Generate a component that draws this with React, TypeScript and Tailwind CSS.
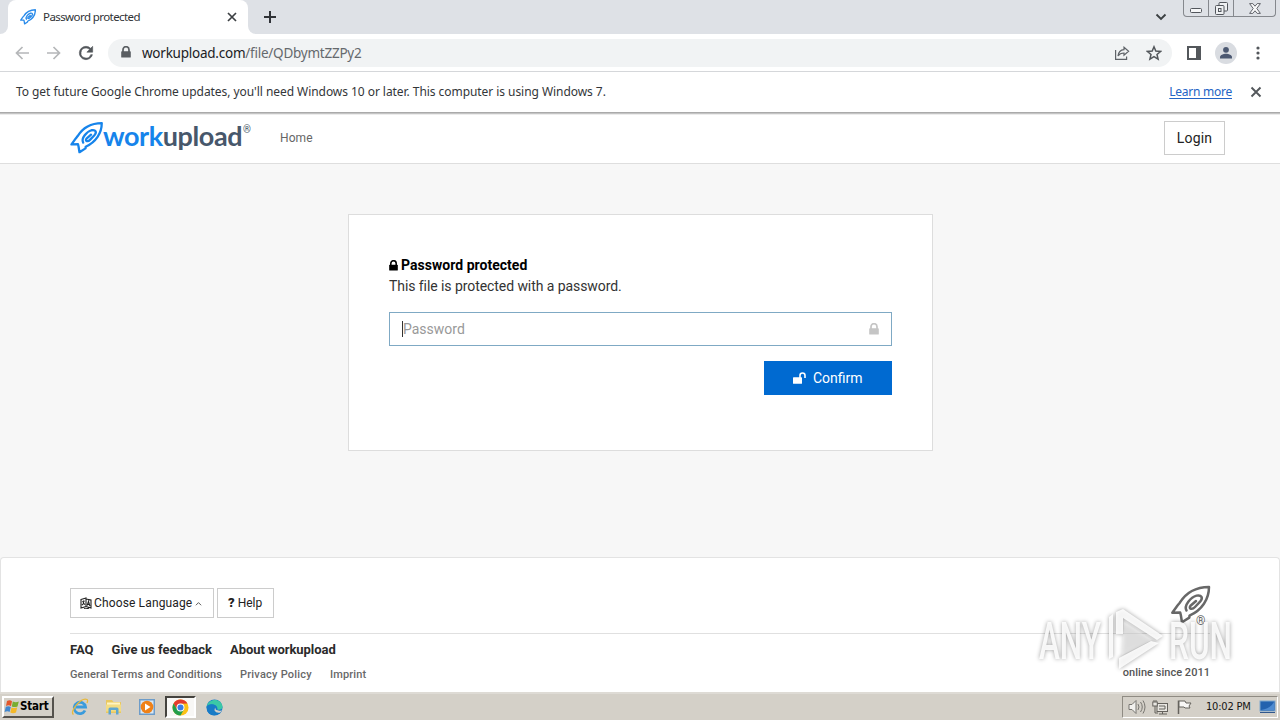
import type { ReactNode } from "react";

function Rocket({ className, sw = 2.6 }: { className: string; sw?: number }) {
  return (
    <svg viewBox="0 0 40 40" className={className} fill="none" stroke="currentColor" strokeWidth={sw} strokeLinejoin="round" strokeLinecap="round">
      <path d="M38.500 1.900C25.500 2 15.500 7.500 9.300 17.700L7 20.500 1.800 27.800 9.700 27.600 10.300 30 11.500 37.200 18.800 32.600 19 30.600C31.500 25 38.500 14 38.500 1.900Z" />
      <path d="M16 25.500C13 20.500 20.500 12 26 10.600C31.300 9.500 32.800 13.200 29.600 16.700L24.500 22C21.500 25.200 17.800 23.800 20 20.800L25.500 16" />
    </svg>
  );
}

function Lock({ className }: { className: string }) {
  return (
    <svg viewBox="0 0 10 12" className={className}>
      <path d="M2 6V3.700a3 3 0 0 1 6 0V6" fill="none" stroke="currentColor" strokeWidth="1.700" />
      <rect x="0.200" y="5.200" width="9.600" height="6.400" rx="0.700" fill="currentColor" />
    </svg>
  );
}

function BrowserTabs() {
  return (
    <div className="flex h-[34px] shrink-0 items-start bg-[#dee1e6]">
      <div className="h-[34px] w-2 bg-white">
        <div className="h-full w-full rounded-br-lg bg-[#dee1e6]" />
      </div>
      <div className="flex h-[34px] w-[240px] items-center rounded-t-lg bg-white pl-3 pr-2.5">
        <Rocket className="h-4 w-4 shrink-0 text-[#2a8bea]" sw={3.3} />
        <span className="ml-[7px] flex-1 whitespace-nowrap text-[11.500px] tracking-[-0.58px] text-[#303336]">Password protected</span>
        <svg viewBox="0 0 12 12" className="h-3 w-3 text-[#3c4043]" stroke="currentColor" strokeWidth="1.700"><path d="M2 2l8 8M10 2l-8 8" /></svg>
      </div>
      <div className="h-[34px] w-2 bg-white">
        <div className="h-full w-full rounded-bl-lg bg-[#dee1e6]" />
      </div>
      <svg viewBox="0 0 14 14" className="ml-[7px] mt-[10px] h-[14px] w-[14px]" stroke="#303338" strokeWidth="2"><path d="M7 1v12M1 7h12" /></svg>
      <div className="flex-1" />
      <svg viewBox="0 0 12 8" className="mr-4 mt-[13px] h-2 w-3" fill="none" stroke="#3c4043" strokeWidth="1.900"><path d="M1.500 1.500L6 6l4.500-4.500" /></svg>
      <div className="mr-[4px] flex h-[17px] w-[93px] rounded-b-[4px] border border-t-0 border-[#85888d] text-[#52565c]">
        <div className="flex w-[25px] justify-center border-r border-[#85888d]">
          <svg viewBox="0 0 12 5" className="mt-[8px] h-[5px] w-3"><rect x=".5" y=".5" width="11" height="4" rx="1" fill="#f5f6f7" stroke="currentColor" /></svg>
        </div>
        <div className="flex w-[25px] justify-center border-r border-[#85888d]">
          <svg viewBox="0 0 13 13" className="mt-[2px] h-[13px] w-[13px]" fill="#eef0f2" stroke="currentColor"><rect x="4" y=".5" width="8.500" height="8.500" rx="1" /><rect x=".5" y="3.500" width="8.500" height="9" rx="1" /><rect x="3.500" y="6.500" width="2.500" height="3" /></svg>
        </div>
        <div className="flex flex-1 justify-center">
          <svg viewBox="0 0 12 11" className="mt-[3px] h-[11px] w-3" fill="#f8f8f9" stroke="currentColor" strokeWidth=".9"><path d="M.6.6h3.200L6 3.200 8.200.6h3.200L7.800 5.500l3.600 4.900H8.200L6 7.800 3.800 10.400H.6l3.600-4.900z" /></svg>
        </div>
      </div>
    </div>
  );
}

function Toolbar() {
  return (
    <div className="flex h-[38px] shrink-0 items-center border-b border-[#d5d7da] bg-white pl-[15px] pr-[17px]">
      <svg viewBox="0 0 14 14" className="h-[14px] w-[14px]" fill="none" stroke="#b5b7b9" strokeWidth="1.700"><path d="M14 7H1.500M7.500 1L1.500 7l6 6" /></svg>
      <svg viewBox="0 0 14 14" className="ml-[18px] h-[14px] w-[14px]" fill="none" stroke="#b5b7b9" strokeWidth="1.700"><path d="M0 7h12.500M6.500 1l6 6-6 6" /></svg>
      <svg viewBox="0 0 24 24" className="ml-[15px] h-[20px] w-[20px]" fill="#53575b"><path d="M17.650 6.350A7.960 7.960 0 0 0 12 4a8 8 0 1 0 7.730 10h-2.080A6 6 0 1 1 12 6c1.660 0 3.140.690 4.220 1.780L13 11h7V4l-2.350 2.350z" stroke="#53575b" strokeWidth=".7" /></svg>
      <div className="ml-3 flex h-7 w-[1064px] items-center rounded-full bg-[#f1f3f4] pl-[13px] pr-[10px]">
        <Lock className="mb-px h-[12px] w-[10px] text-[#5a5e62]" />
        <span className="ml-[11px] flex-1 text-[13.500px] leading-7 tracking-[-0.24px] text-[#65696d]"><span className="text-[#202124]">workupload.com</span>/file/QDbymtZZPy2</span>
        <svg viewBox="0 0 16 16" className="h-4 w-4" fill="none" stroke="#5f6368" strokeWidth="1.200"><path d="M1.600 5v9.400h11v-2.800M10 2.200l4.600 4-4.600 4V8C7 8 5.300 9 4 11c.4-3.500 2.500-6 6-6.300z" /></svg>
        <svg viewBox="0 0 16 16" className="ml-4 h-4 w-4" fill="none" stroke="#53575b" strokeWidth="1.500"><path d="M8 1.800l1.800 4.300 4.700.4L11 9.500l1.100 4.600L8 11.700l-4.100 2.400L5 9.500 1.500 6.500l4.700-.4z" /></svg>
      </div>
      <svg viewBox="0 0 14 14" className="ml-[15px] h-[14px] w-[14px]"><rect x="1" y="1" width="12" height="12" fill="none" stroke="#53575b" strokeWidth="2" /><rect x="9" width="5" height="14" fill="#53575b" /></svg>
      <svg viewBox="0 0 22 22" className="ml-[14px] h-[22px] w-[22px]"><circle cx="11" cy="11" r="11" fill="#d9dce1" /><circle cx="11" cy="7.800" r="2.900" fill="#4b5871" /><path d="M5 16.500v-1.300c0-2.200 3.500-3.400 6-3.400s6 1.200 6 3.400v1.300z" fill="#4b5871" /></svg>
      <svg viewBox="0 0 4 14" className="ml-[19px] h-[14px] w-1" fill="#53575b"><circle cx="2" cy="2" r="1.600" /><circle cx="2" cy="7" r="1.600" /><circle cx="2" cy="12" r="1.600" /></svg>
    </div>
  );
}

function Watermark() {
  return (
    <svg viewBox="0 0 212 70" className="absolute left-[1034px] top-[604px] h-[70px] w-[212px]" style={{ filter: "drop-shadow(0 0 2px rgba(0,0,0,.42))" }}>
      <g fill="#fff" fillOpacity=".88" fontFamily="Roboto, sans-serif" fontWeight="500" fontSize="51">
        <text x="5" y="55" textLength="62" lengthAdjust="spacingAndGlyphs">ANY</text>
        <text x="135" y="55" textLength="63" lengthAdjust="spacingAndGlyphs">RUN</text>
      </g>
      <path d="M75 55V13l4-3v43zM82 30V8l7-3 40 27-6 4-34-22v16zM85 54l32-17 8 2-40 26z" fill="#fff" fillOpacity=".88" />
      <path d="M90 18l28 18-30 15z" fill="#eee" fillOpacity=".45" />
    </svg>
  );
}

function OutlineButton({ children, className }: { children: ReactNode; className: string }) {
  return <button className={`flex items-center whitespace-nowrap border border-[#ccc] bg-white ${className}`}>{children}</button>;
}

function Footer() {
  return (
    <footer className="h-[135px] shrink-0 rounded-t border border-b-0 border-[#e3e3e3] bg-white px-[69px] pt-[30px]">
      <div className="flex h-[45px] justify-between">
        <div className="flex gap-[3px] text-[12px] text-[#222]">
          <OutlineButton className="h-[30px] w-[144px] pl-[9px]">
            <svg viewBox="0 0 12 12" className="mr-[2px] h-3 w-3" fill="none" stroke="#222" strokeWidth="1.100"><path d="M1 2.500l5-1.500v8.500l-5 1.500zM6 2l5 1v8l-5-1.500M2.300 4.700l2.400-.7M3.500 3.500v3L2 8.200M4.900 7.700L3.400 6M7.200 8.500L8.500 4.400l1.400 4.700M7.700 7.200l1.600.3M4 11.400c2 .8 3.500.4 5-.3" /></svg>
            <span className="tracking-[0.14px]">Choose Language</span>
            <svg viewBox="0 0 8 5" className="ml-[3px] mt-px h-[5px] w-[7px]" fill="none" stroke="#444"><path d="M1 4.500l3-3 3 3" /></svg>
          </OutlineButton>
          <OutlineButton className="h-[30px] w-[57px] pl-[10px]"><b className="mr-[3px] text-[13px] font-black">?</b>Help</OutlineButton>
        </div>
        <div className="relative h-10 w-10">
          <Rocket className="-mt-[3px] h-10 w-[41px] max-w-none text-[#686868]" sw={2.5} />
          <span className="absolute left-[26px] top-[25px] text-[12px] leading-4 text-[#686868]">®</span>
        </div>
      </div>
      <div className="flex justify-between border-t border-[#e0e0e0]">
        <div>
          <div className="mt-[7px] flex gap-[18px] text-[13px] font-bold leading-[18px] text-[#2b2b2b]">
            <span>FAQ</span><span className="tracking-[0.02px]">Give us feedback</span><span className="tracking-[-0.05px]">About workupload</span>
          </div>
          <div className="mt-[8px] flex gap-[18px] text-[11px] font-medium leading-4 text-[#686868]">
            <span className="tracking-[0.13px]">General Terms and Conditions</span><span className="tracking-[0.23px]">Privacy Policy</span><span className="tracking-[0.13px]">Imprint</span>
          </div>
        </div>
        <span className="mt-[31px] whitespace-nowrap text-[11px] font-medium leading-4 tracking-[0.03px] text-[#555]">online since 2011</span>
      </div>
    </footer>
  );
}

function Taskbar() {
  return (
    <div className="flex h-[28px] shrink-0 items-center border-t-2 border-[#dedbd5] bg-[#d4d0c8] pl-[2px] pr-[2px]">
      <button className="flex h-[22px] w-[52px] items-center border-2 border-b-[#55524d] border-l-[#fff] border-r-[#55524d] border-t-[#fff] bg-[#d4d0c8] font-[DejaVu_Sans_Condensed,sans-serif] text-[11.500px] font-bold tracking-[-0.2px] text-black">
        <svg viewBox="0 0 16 16" className="h-[16px] w-[16px] shrink-0"><path d="M3 2q3-1.500 5 .3L7 7.200Q5 5.500 2 6.900z" fill="#e3572b" /><path d="M8.800 2.600q3 1.300 6 0L13.500 7.500q-3 1.200-5.700 0z" fill="#79ad32" /><path d="M1.800 7.700q3-1.200 5 .4L5.600 13q-2-1.500-5 0z" fill="#4187cf" /><path d="M7.500 8.400q3 1.200 5.700.2L12 13.500q-3 1.300-5.700 0z" fill="#f4b829" /></svg>
        Start
      </button>
      <svg viewBox="0 0 18 18" className="ml-[17px] h-[18px] w-[18px]" fill="none"><path d="M14 12.500A5.700 5.700 0 1 1 14.500 9H5" stroke="#3a9bdc" strokeWidth="2.800" /><path d="M2.500 16.500C-2 14 10-1 16 1.500c1.200.7.500 2.300 0 3.500" stroke="#e8b93b" strokeWidth="1.300" /></svg>
      <svg viewBox="0 0 18 18" className="ml-4 h-[18px] w-[18px]"><path d="M1 2h6l1.500 2H16v11H1z" fill="#e9c860" /><path d="M2 4.500h13v3H2z" fill="#fff4c1" /><path d="M1 6.500h15v7H1z" fill="#f3dc83" /><path d="M3.500 16.500V11q0-1.500 1.500-1.500h7q1.500 0 1.500 1.500v5.500H11v-4.500H6v4.500z" fill="#5fa6d0" /></svg>
      <svg viewBox="0 0 18 18" className="ml-[15px] h-[18px] w-[18px]"><rect x="1" y="1" width="16" height="16" fill="#6d9cc9" /><rect x="2.500" y="2.500" width="13" height="13" fill="#d9e8f5" /><circle cx="9" cy="9" r="6.300" fill="#ef8118" /><path d="M7 5.500l5.500 3.500L7 12.500z" fill="#fff" /></svg>
      <div className="ml-[9px] flex h-[22px] w-[31px] items-center justify-center border-2 border-b-[#fff] border-l-[#44423e] border-r-[#fff] border-t-[#44423e] bg-[#f8f7f5]">
        <svg viewBox="0 0 18 18" className="h-[17px] w-[17px] shrink-0"><circle cx="9" cy="9" r="8.500" fill="#fbc116" /><path d="M1.640 4.750A8.500 8.500 0 0 1 16.360 4.750L9 5 5.500 11z" fill="#e33b2e" /><path d="M1.640 4.750A8.500 8.500 0 0 0 9 17.500l3.700-6.500L9 13 5.500 11z" fill="#229e4c" /><circle cx="9" cy="9" r="4.200" fill="#fff" /><circle cx="9" cy="9" r="3.200" fill="#397de5" /></svg>
      </div>
      <svg viewBox="0 0 18 18" className="ml-[10px] h-[17px] w-[17px]"><circle cx="9" cy="9" r="8.500" fill="#1577ca" /><path d="M.7 8C2-.5 16-2 17.500 8c0 3-3 4-5.500 3 1-5-7-7-11.300-3z" fill="#3bc8a6" /><path d="M.6 8C3 4 11 5 11 9c-3-1-2 5 4 4.500-3 5-11 5-13.500-.5z" fill="#187bc6" /><path d="M11 9q-2 1-.5 2.500 3 1.500 6.500.3-1 2-2.500 2.700-4 .5-5.500-2.300-.5-2.500 2-3.200z" fill="#d4d0c8" /></svg>
      <div className="flex-1" />
      <div className="flex h-[22px] w-[156px] items-center border border-b-white border-l-[#8f8b83] border-r-white border-t-[#8f8b83] pl-[5px]">
        <svg viewBox="0 0 18 16" className="h-4 w-[18px]" fill="#f2f1ee" stroke="#777570"><path d="M1 5.500h3l4-4v13l-4-4H1z" /><path d="M10 5q2 3 0 6M12.500 3q3.500 5 0 10M15 1.500q4 6.500 0 13" fill="none" /></svg>
        <svg viewBox="0 0 17 16" className="ml-[6px] h-4 w-[17px]" fill="#e8e6e1" stroke="#65625d"><rect x="5" y="4.500" width="10.500" height="8" /><path d="M7 15h8M10.500 13v2M7 7h6v3H7" /><rect x=".8" y="3" width="4.500" height="4" /><path d="M2 1v2M4 1v2M3 7v7h3" fill="none" /></svg>
        <svg viewBox="0 0 16 16" className="ml-[7px] h-4 w-4" fill="#f8f7f5" stroke="#65625d"><path d="M2.500 15V1.500" strokeWidth="1.500" /><path d="M3 2h6l1 2h5l-2 3 1 2H9L8 8H3z" /></svg>
        <span className="ml-[14px] w-[47px] whitespace-nowrap font-[DejaVu_Sans_Condensed,sans-serif] text-[11px] tracking-[-0.2px] text-[#151515]">10:02 PM</span>
        <svg viewBox="0 0 17 14" className="ml-[6px] h-[14px] w-[17px]"><rect x="1" y="1" width="15" height="10" fill="#2362ae" stroke="#7ea7ce" /><path d="M2 10Q11 9 15 2v8z" fill="#4e8bd1" /><path d="M1 12.500h15" stroke="#30578c" /></svg>
      </div>
    </div>
  );
}

export default function App() {
  return (
    <div className="relative flex h-[720px] w-[1280px] flex-col overflow-hidden bg-[#f7f7f7] font-[Roboto,sans-serif]">
      <div className="font-[Noto_Sans,sans-serif]">
        <BrowserTabs />
        <Toolbar />
        <div className="flex h-[40px] items-center bg-white pl-4 pr-[18px] text-[12px] text-[#333639]">
          <span className="flex-1 tracking-[-0.055px]">To get future Google Chrome updates, you'll need Windows 10 or later. This computer is using Windows 7.</span>
          <span className="tracking-[-0.25px] text-[#2364c5] underline underline-offset-2">Learn more</span>
          <svg viewBox="0 0 12 12" className="ml-[18px] h-3 w-3" stroke="#53575b" strokeWidth="1.900"><path d="M1.500 1.500l9 9M10.500 1.500l-9 9" /></svg>
        </div>
      </div>
      <header className="flex h-[52px] shrink-0 items-center border-b border-[#dedede] bg-white pl-[70px] pr-[55px] shadow-[inset_0_1px_0_#aaa,inset_0_2px_0_#c4c4c4,inset_0_3px_0_#ececec]">
        <div className="flex w-[180px] items-center">
          <Rocket className="h-[34px] w-[33px] shrink-0 text-[#1684eb]" sw={2.8} />
          <span className="mb-[3px] whitespace-nowrap font-[Lato,sans-serif] text-[27px] font-bold leading-8 tracking-[-0.42px] text-[#47576b]"><span className="text-[#1684eb]">work</span>upload</span>
          <span className="mb-[16px] ml-px text-[10px] text-[#47576b]">®</span>
        </div>
        <span className="ml-[30px] flex-1 text-[12px] tracking-[0.1px] text-[#666]">Home</span>
        <OutlineButton className="h-[34px] w-[61px] justify-center pt-px text-[14px] tracking-[0.15px] text-[#222]">Login</OutlineButton>
      </header>
      <main className="flex flex-1 justify-center pt-[50px]">
        <section className="mr-[-1px] h-[237px] w-[585px] border border-[#ddd] bg-white px-10 pt-[40px]">
          <h1 className="flex h-[21px] items-center text-[14px] font-bold tracking-[0.03px] text-black"><Lock className="mr-[3px] h-[11px] w-[9px]" />Password protected</h1>
          <p className="h-[21px] text-[14px] leading-[21px] tracking-[-0.07px] text-[#333]">This file is protected with a password.</p>
          <div className="mt-[15px] flex h-[34px] items-center border border-[#7fa9c4] pl-3 pr-3 text-[14px] text-[#999]">
            <span className="h-4 w-px bg-[#333]" />
            <span className="flex-1">Password</span>
            <Lock className="h-[12px] w-[10px] text-[#c5c5c5]" />
          </div>
          <button className="ml-auto mt-[15px] flex h-[34px] w-[128px] items-center bg-[#006ad1] pl-[29px] text-[14px] text-white">
            <svg viewBox="0 0 13 12" className="mr-[7px] h-3 w-[13px]"><rect y="5.300" width="9" height="6.500" rx=".6" fill="currentColor" /><path d="M7 6V3.500a2.500 2.500 0 0 1 5 0V6" fill="none" stroke="currentColor" strokeWidth="1.600" /></svg>
            <span>Confirm</span>
          </button>
        </section>
      </main>
      <Footer />
      <Taskbar />
      <Watermark />
    </div>
  );
}
